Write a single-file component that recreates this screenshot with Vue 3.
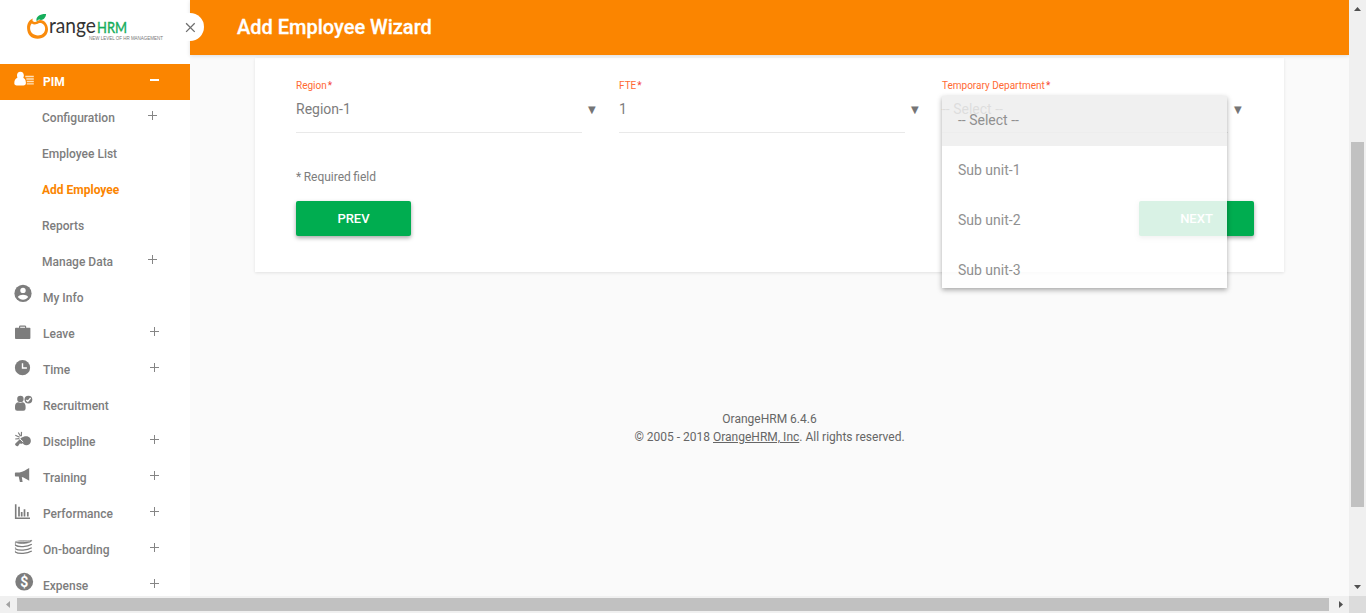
<script setup>
const subItems = [
  { label: 'Configuration', plus: true },
  { label: 'Employee List' },
  { label: 'Add Employee', active: true },
  { label: 'Reports' },
  { label: 'Manage Data', plus: true },
]
const menu = [
  { label: 'My Info', icon: 'user' },
  { label: 'Leave', icon: 'case', plus: true },
  { label: 'Time', icon: 'clock', plus: true },
  { label: 'Recruitment', icon: 'recruit' },
  { label: 'Discipline', icon: 'whistle', plus: true },
  { label: 'Training', icon: 'horn', plus: true },
  { label: 'Performance', icon: 'chart', plus: true },
  { label: 'On-boarding', icon: 'stack', plus: true },
  { label: 'Expense', icon: 'dollar', plus: true },
]
const fields = [
  { label: 'Region', value: 'Region-1' },
  { label: 'FTE', value: '1' },
  { label: 'Temporary Department', value: '-- Select --', open: true },
]
const options = ['-- Select --', 'Sub unit-1', 'Sub unit-2', 'Sub unit-3']
</script>

<template>
  <div class="window">
    <div class="page">
      <aside class="sidebar">
        <div class="brand">
          <svg width="190" height="64" viewBox="0 0 190 64">
            <path d="M32.8 18.6C29 20.2 26.9 23.8 27.1 28.3C27.3 34.8 31.5 38.8 37.6 38.8C43.8 38.8 48 34.7 48 29.3C48 24 44.2 19.7 40 19.9C37 20.1 36.8 22 34.6 22C32.6 22 32 20.4 32.8 18.6ZM31.8 23.4C34 25.2 36.9 24.3 38.6 23.2C42.2 22.2 45.2 25.2 45.1 28.7C45 32.7 42 35.4 38 35.4C33.6 35.4 30.3 32.8 30.1 28.6C30 26.4 30.6 24.6 31.8 23.4Z" fill="#f98b0c" fill-rule="evenodd" />
            <path d="M36.4 20.6C36.2 16.5 40 13.9 46.1 14.1C45.7 18.6 42.2 21.1 38.9 19.3L42.8 16.3L36.9 20.9Z" fill="#15ad5b" />
            <text x="49" y="33.3" class="brand-name" textLength="47" lengthAdjust="spacingAndGlyphs">range</text>
            <text x="97" y="33.3" class="brand-hrm" textLength="30" lengthAdjust="spacingAndGlyphs">HRM</text>
            <text x="89" y="40" class="brand-tag" textLength="74" lengthAdjust="spacingAndGlyphs">NEW LEVEL OF HR MANAGEMENT</text>
          </svg>
        </div>
        <div class="row top">
          <svg class="icon" width="24" height="24" viewBox="0 0 24 24">
            <ellipse cx="8.4" cy="5.6" rx="3.4" ry="3.9" />
            <path d="M5.5 7.8C3.3 8.4 2.3 10.4 2.3 13.2C2.3 14.6 3.2 15.4 4.7 15.4H11.4C13 15.4 14 14.6 13.9 12.8C13.8 10.2 13 8.4 11 7.8Z" />
            <path d="M13.3 6.5H21.8M14.3 9H21.8M14.8 11.5H21.8M14.8 13.8H21.8" stroke="#ffe1b9" stroke-width="1.3" />
          </svg>
          <span class="label">PIM</span><span class="toggle minus"></span>
        </div>
        <div v-for="s in subItems" :key="s.label" class="row sub" :class="{ active: s.active }">
          <span class="label">{{ s.label }}</span><span v-if="s.plus" class="toggle plus"></span>
        </div>
        <div v-for="m in menu" :key="m.label" class="row">
          <svg class="icon" width="24" height="24" viewBox="0 0 24 24">
            <g v-if="m.icon === 'user'">
              <circle cx="11" cy="9.4" r="8.6" />
              <circle cx="11" cy="6.4" r="2.7" fill="#fff" />
              <path d="M5.8 13.1C7.7 10.1 14.3 10.1 16.2 13.1C13.9 16.5 8.1 16.5 5.8 13.1Z" fill="#fff" />
            </g>
            <g v-else-if="m.icon === 'case'">
              <path d="M3 8.6Q3 7.8 3.8 7.8H17.6Q18.4 7.8 18.4 8.6V18Q18.4 19 17.5 19H3.9Q3 19 3 18Z" />
              <path d="M7.6 7.9V6.8Q7.6 6.2 8.4 6.2H12.8Q13.6 6.2 13.6 6.8V7.9" fill="none" stroke="#7d7d7d" stroke-width="1.2" />
            </g>
            <g v-else-if="m.icon === 'clock'">
              <circle cx="10.5" cy="11.7" r="7.6" />
              <path d="M10.5 7.2V12H14.9" fill="none" stroke="#fff" stroke-width="1.4" />
            </g>
            <g v-else-if="m.icon === 'recruit'">
              <circle cx="8.4" cy="6.9" r="3.2" />
              <path d="M6 10.3C3.9 10.8 3 12.4 3 14.8V16.6Q3 18.8 5.2 18.8H11.4Q13.6 18.8 13.6 16.6V14.8C13.6 12.4 12.7 10.8 10.8 10.3Q8.4 11.2 6 10.3Z" />
              <circle cx="16.4" cy="7.6" r="3.9" />
              <path d="M14.3 7.9L15.8 9.3L18.6 6" fill="none" stroke="#fff" stroke-width="1.3" />
            </g>
            <g v-else-if="m.icon === 'whistle'" transform="translate(0 2)">
              <path d="M3.2 13.8L9.3 7.7C12 5.8 16.2 5.4 18 7.9C20 11 18.4 15.3 14.4 15.2C12 15.2 11.5 13.9 10.5 13.3L9 14L8 13.3L6.3 15.7Q5.2 16.8 4 15.8Q2.6 14.8 3.2 13.8Z" />
              <path d="M3.3 5.2L7.6 7.2M6.3 2.5L8.5 6.3M9.5 1.9L9.3 6.2M3.2 9L7.4 8.6" fill="none" stroke="#7d7d7d" stroke-width="1.2" />
              <path d="M7.9 8.9L11.2 12" stroke="#fff" stroke-width="1" />
            </g>
            <g v-else-if="m.icon === 'horn'" transform="translate(0 2)">
              <path d="M17.2 2V14.8C14.3 12.7 12 11.5 9.8 10.9L10.6 15.9H7.9L6.7 10.6H3.6Q2.9 10.6 2.9 9.6V7.3Q2.9 6.4 3.7 6.4H7.4C11 5.8 14.2 3.8 17.2 2Z" />
            </g>
            <g v-else-if="m.icon === 'chart'" fill="none" stroke="#7d7d7d" transform="translate(0 1.2)">
              <path d="M3.7 3V17H18" stroke-width="1.6" />
              <path d="M7 15.2V5.5M9.7 15.2V10.8M12.5 15.2V8M15.8 15.2V10.8" stroke-width="1.7" />
            </g>
            <g v-else-if="m.icon === 'stack'" fill="none" stroke="#7d7d7d" stroke-width="1.3" transform="translate(0 1.7)">
              <path d="M3.2 4.4C5 2.3 15 3.6 19.8 2.6C20 5.3 8.5 7.4 3.2 4.4Z" fill="#7d7d7d" stroke-width=".6" />
              <path d="M4.5 3.9Q11 4.4 18 3.2" stroke="#fff" stroke-width=".6" />
              <path d="M3.2 7.4C7 9.8 15 9.1 19.8 6.5M3.2 11C7 13.4 15 12.7 19.8 10M3.2 14.3C7 16.7 15 16 19.8 13.3" />
              <path d="M3.4 4.6V7.4M3.4 9.6V11M3.4 13V14.3" stroke-width=".7" />
            </g>
            <g v-else transform="translate(0 .5)">
              <circle cx="12.2" cy="9.2" r="8.9" />
              <text x="12.2" y="14.2" class="dollar">$</text>
            </g>
          </svg>
          <span class="label">{{ m.label }}</span><span v-if="m.plus" class="toggle plus"></span>
        </div>
      </aside>

      <main class="main">
        <header class="header">
          <h1>Add Employee Wizard</h1>
          <span class="close">
            <svg width="28" height="28" viewBox="0 0 28 28"><path d="M10.1 10.3L18.7 18.9M18.7 10.3L10.1 18.9" stroke="#6e6e6e" stroke-width="1.3" /></svg>
          </span>
        </header>
        <section class="card">
          <div class="fields">
            <div v-for="f in fields" :key="f.label" class="field">
              <label>{{ f.label }}<em>*</em></label>
              <div class="select"><span class="value">{{ f.value }}</span><span class="caret">▼</span></div>
              <ul v-if="f.open" class="dropdown">
                <li v-for="(o, i) in options" :key="o" :class="{ selected: i === 0 }">{{ o }}</li>
              </ul>
            </div>
          </div>
          <p class="required">* Required field</p>
          <div class="actions"><button>PREV</button><button>NEXT</button></div>
        </section>
        <footer>
          <div>OrangeHRM 6.4.6</div>
          <div>© 2005 - 2018 <u>OrangeHRM, Inc</u>. All rights reserved.</div>
        </footer>
      </main>
    </div>
    <div class="vbar">
      <svg width="17" height="17" viewBox="0 0 17 17"><path d="M5 11L8.5 7L12 11Z" fill="#505050" /></svg>
      <div class="vthumb"></div>
      <svg width="17" height="17" viewBox="0 0 17 17"><path d="M5 6L8.5 10L12 6Z" fill="#505050" /></svg>
    </div>
    <div class="hbar">
      <svg width="17" height="17" viewBox="0 0 17 17"><path d="M10 5V12L6 8.5Z" fill="#a3a3a3" /></svg>
      <div class="hthumb"></div>
      <svg width="17" height="17" viewBox="0 0 17 17"><path d="M7 5V12L11 8.5Z" fill="#505050" /></svg>
    </div>
    <div class="corner"></div>
  </div>
</template>

<style scoped>
* { box-sizing: border-box; }
.window {
  display: grid;
  grid-template: 596px 17px / 1349px 17px;
  width: 1366px;
  height: 613px;
  overflow: hidden;
  font-family: Roboto, "Liberation Sans", sans-serif;
  color: #7d7d7d;
}
.page { display: flex; overflow: hidden; background: #fafafa; }
.sidebar { flex: 0 0 190px; background: #fff; }
.brand { height: 64px; }
.brand svg { display: block; }
.brand-name { font: 21.5px Lato, sans-serif; fill: #333; }
.brand-hrm { font: 14.8px Lato, sans-serif; fill: #15ad5b; stroke: #15ad5b; stroke-width: .4; }
.brand-tag { font: 5.8px "Liberation Sans", sans-serif; fill: #777; }
.row { display: flex; height: 36px; padding-left: 12px; font-size: 12px; font-weight: 500; line-height: 36px; }
.icon { flex: 0 0 24px; margin-top: 4px; fill: #7d7d7d; }
.label { flex: none; width: 106px; margin-left: 7px; white-space: nowrap; }
.sub .label { width: 106px; margin-left: 30px; }
.sub.active { color: #fb8500; font-weight: 700; }
.top { background: #fb8500; color: #fff; font-weight: 700; }
.top .icon { fill: #fff; margin-top: 6px; }
.toggle { flex: none; width: 9px; height: 9px; margin-top: 11px; margin-left: 0.5px; }
.sub .toggle { margin-left: 0; }
.plus { background: linear-gradient(#858585, #858585) 0 4px / 9px 1px no-repeat, linear-gradient(#858585, #858585) 4px 0 / 1px 9px no-repeat; }
.minus { background: linear-gradient(#fff, #fff) 0 4px / 9px 2px no-repeat; }
.dollar { font: 700 14px Roboto, sans-serif; fill: #fff; text-anchor: middle; }
.main { flex: 1; }
.header { position: relative; height: 55px; padding-left: 47px; background: #fb8500; box-shadow: 0 1px 4px rgba(0, 0, 0, .12); }
h1 { margin: 0; color: #fff; font-size: 20px; font-weight: 500; line-height: 54px; -webkit-text-stroke: .3px #fff; }
.close { position: absolute; left: -14px; top: 13px; width: 28px; height: 28px; border-radius: 50%; background: #fff; }
.close svg { display: block; }
.card { width: 1029px; height: 214px; margin: 3px 0 0 65px; padding: 20px 30px 0 41px; background: #fff; box-shadow: 0 1px 3px rgba(0, 0, 0, .1); }
.fields { display: flex; }
.field { position: relative; flex: 0 0 323px; }
label { display: block; height: 16px; font-size: 10px; line-height: 16px; color: #ff6a33; }
label em { font-style: normal; color: #f44336; margin-left: 1px; }
.select { display: flex; height: 39px; line-height: 31px; font-size: 14px; }
.value { width: 286px; border-bottom: 1px solid #e9e9e9; }
.caret { margin-left: 6px; font: 10px/31px "DejaVu Sans", sans-serif; color: #757575; }
.dropdown { position: absolute; left: 0; top: 18px; width: 285px; height: 192px; margin: 0; padding: 0; overflow: hidden; list-style: none; background: #fff; opacity: .85; box-shadow: 0 2px 5px rgba(0, 0, 0, .4); font-size: 14px; z-index: 2; }
.dropdown li { height: 50px; padding-left: 16px; line-height: 49px; }
.selected { background: #eee; }
.required { margin: 35px 0 15px; font-size: 12px; line-height: 18px; word-spacing: -.5px; }
.actions { display: flex; justify-content: space-between; }
button { width: 115px; height: 35px; padding: 0; border: 0; border-radius: 2px; background: #00ad50; color: #fff; font: 500 13px Roboto, sans-serif; box-shadow: 0 2px 4px rgba(0, 0, 0, .35); }
footer { margin-top: 138px; text-align: center; font-size: 12px; line-height: 18px; color: #666; }
.vbar, .hbar { display: flex; background: #f0f0f0; }
.vbar { flex-direction: column; }
.vbar svg { display: block; flex: none; }
.vbar svg:last-child { margin-top: auto; }
.vthumb { flex: none; width: 13px; height: 365px; margin: 125px 0 0 2px; background: #c1c1c1; }
.hthumb { width: 1312px; height: 13px; margin-top: 2px; background: #c1c1c1; }
.hbar svg:last-child { margin-left: auto; }
.corner { background: #dcdcdc; }
</style>
